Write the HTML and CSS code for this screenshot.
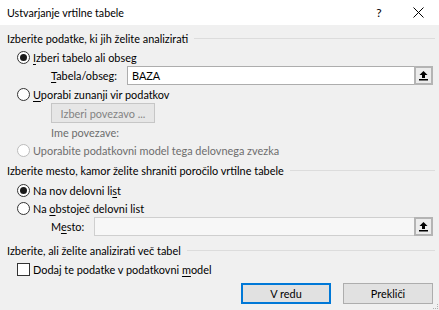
FILE: index.html
```html
<!DOCTYPE html>
<html lang="sl">
<head>
<meta charset="utf-8">
<title>Ustvarjanje vrtilne tabele</title>
<link rel="stylesheet" href="styles.css">
</head>
<body>
<div class="dialog">
  <div class="titlebar">
    <span class="title">Ustvarjanje vrtilne tabele</span>
    <span class="help">?</span>
    <span class="close">
      <svg width="11" height="11" viewBox="0 0 11 11"><path d="M0.5 0.5 L10.5 10.5 M10.5 0.5 L0.5 10.5" stroke="#000" stroke-width="1"/></svg>
    </span>
  </div>
  <div class="content">
    <div class="group-head g1"><span>Izberite podatke, ki jih želite analizirati</span><i class="rule"></i></div>
    <div class="row opt r1"><span class="radio checked"></span><span><u>I</u>zberi tabelo ali obseg</span></div>
    <div class="row field f1">
      <span class="flabel"><u>T</u>abela/obseg:</span>
      <span class="input">BAZA</span>
      <span class="collapse"><svg width="11" height="11" viewBox="0 0 11 11"><path d="M5.5 1 L9.5 5 L7 5 L7 8 L4 8 L4 5 L1.5 5 Z" fill="#000"/><rect x="1" y="9" width="9" height="1.5" fill="#000"/></svg></span>
    </div>
    <div class="row opt r2"><span class="radio"></span><span><u>U</u>porabi zunanji vir podatkov</span></div>
    <div class="row sub subbtn"><span class="btn disabled">Izberi povezavo ...</span></div>
    <div class="row sub dim ime">Ime povezave:</div>
    <div class="row opt dim"><span class="radio disabled"></span><span>Uporabite podatkovni model tega delovnega zvezka</span></div>

    <div class="group-head g2"><span>Izberite mesto, kamor želite shraniti poročilo vrtilne tabele</span><i class="rule"></i></div>
    <div class="row opt r4"><span class="radio checked"></span><span>Na nov delovni li<u>s</u>t</span></div>
    <div class="row opt"><span class="radio"></span><span>Na <u>o</u>bstoječ delovni list</span></div>
    <div class="row field f2">
      <span class="flabel">M<u>e</u>sto:</span>
      <span class="input empty"></span>
      <span class="collapse"><svg width="11" height="11" viewBox="0 0 11 11"><path d="M5.5 1 L9.5 5 L7 5 L7 8 L4 8 L4 5 L1.5 5 Z" fill="#000"/><rect x="1" y="9" width="9" height="1.5" fill="#000"/></svg></span>
    </div>

    <div class="group-head g3"><span>Izberite, ali želite analizirati več tabel</span><i class="rule"></i></div>
    <div class="row opt r6"><span class="check"></span><span>Dodaj te podatke v podatkovni <u>m</u>odel</span></div>

    <div class="actions">
      <span class="btn default">V redu</span>
      <span class="btn">Prekliči</span>
    </div>
  </div>
  <span class="grip"></span>
</div>
</body>
</html>
```
FILE: styles.css
```css
html, body {
  margin: 0;
  padding: 0;
}
body {
  width: 439px;
  height: 310px;
  overflow: hidden;
  font-family: "Lato", "Noto Sans", sans-serif;
  font-size: 10.9px;
  color: #000;
}
.dialog {
  position: relative;
  width: 439px;
  height: 310px;
  background: #f0f0f0;
  display: flex;
  flex-direction: column;
}
.titlebar {
  height: 25px;
  flex: 0 0 25px;
  background: #fff;
  display: flex;
  align-items: center;
  padding-left: 7px;
}
.title {
  flex: 1;
  font-size: 10.7px;
}
.help {
  width: 12px;
  text-align: center;
  margin-right: 28px;
  font-size: 12px;
}
.close {
  width: 11px;
  height: 11px;
  margin-right: 15px;
  display: flex;
}
.content {
  padding: 0 4px 0 7px;
  display: flex;
  flex-direction: column;
}
.group-head {
  height: 18px;
  display: flex;
  align-items: center;
  white-space: nowrap;
}
.g1 { margin-top: 4px; }
.g2 { margin-top: 2px; }
.g3 { margin-top: 5px; }
.rule {
  flex: 1;
  height: 1px;
  background: #dcdcdc;
  margin-left: 6px;
}
.row {
  height: 18px;
  display: flex;
  align-items: center;
  white-space: nowrap;
}
.r1 { margin-top: 1px; }
.r4 { margin-top: 2px; }
.r6 { margin-top: 1px; }
.opt {
  padding-left: 10px;
}
.radio {
  width: 11px;
  height: 11px;
  border: 1px solid #333;
  border-radius: 50%;
  background: #fff;
  margin-right: 3px;
  display: flex;
  align-items: center;
  justify-content: center;
  flex: 0 0 auto;
}
.radio.checked::after {
  content: "";
  width: 7px;
  height: 7px;
  border-radius: 50%;
  background: #1a1a1a;
}
.radio.disabled {
  border-color: #bcbcbc;
}
.check {
  width: 11px;
  height: 11px;
  border: 1px solid #333;
  background: #fff;
  margin-right: 3px;
  flex: 0 0 auto;
}
.dim { color: #6d6d6d; }
.field {
  height: 19px;
  padding-left: 44px;
}
.flabel { flex: 0 0 auto; }
.f1 .flabel { width: 76px; }
.f2 .flabel { width: 43px; }
.input {
  flex: 1;
  height: 17px;
  border: 1px solid #adadad;
  border-right: none;
  background: #fff;
  display: flex;
  align-items: center;
  padding-left: 4px;
  box-sizing: content-box;
}
.input.empty {
  background: #f7f7f7;
  border-color: #cfcfcf;
}
.collapse {
  width: 15px;
  height: 15px;
  border: 2px solid #b4b4b4;
  background: #ececec;
  display: flex;
  align-items: center;
  justify-content: center;
  margin-right: 2px;
}
.sub {
  padding-left: 44px;
}
.subbtn {
  height: 20px;
}
.btn {
  box-sizing: border-box;
  height: 20px;
  border: 1px solid #adadad;
  background: #e1e1e1;
  display: flex;
  align-items: center;
  justify-content: center;
}
.btn.disabled {
  width: 104px;
  background: #e6e6e6;
  border-color: #c6c6c6;
  color: #838383;
}
.actions {
  margin-top: 5px;
  display: flex;
  justify-content: flex-end;
  gap: 12px;
  padding-right: 2px;
}
.actions .btn {
  width: 90px;
  height: 21px;
}
.btn.default {
  border: 2px solid #0078d7;
}
u {
  text-decoration: underline;
  text-underline-offset: 2px;
}
.grip {
  position: absolute;
  right: 1px;
  bottom: 1px;
  width: 4px;
  height: 4px;
  border-right: 1px dotted #b0b0b0;
  border-bottom: 1px dotted #b0b0b0;
}
```
